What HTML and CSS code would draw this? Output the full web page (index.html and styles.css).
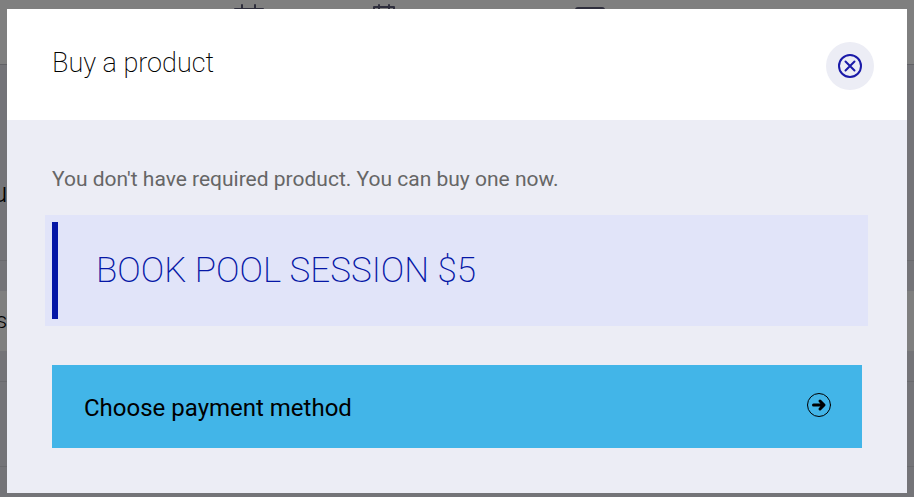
FILE: index.html
```
<!DOCTYPE html>
<html lang="en">

<head>
    <meta charset="UTF-8">
    <meta name="viewport" content="width=device-width, initial-scale=1.0">
    <title>Buy a product</title>
    <link rel="stylesheet" href="styles.css">
</head>

<body>
    <div class="page" aria-hidden="true">
        <div class="page-header">
            <svg class="nav-icon" width="30" height="30" viewBox="0 0 30 30">
                <path d="M1 6h28v24H1zM8 2v6M21 2v6" />
            </svg>
            <svg class="nav-icon" width="24" height="30" viewBox="0 0 24 30">
                <path d="M2 27V4h20v23zM7 2v5M17 2v5" />
            </svg>
            <svg class="nav-icon" width="30" height="30" viewBox="0 0 30 30">
                <rect x="1" y="5" width="28" height="22" rx="2" />
            </svg>
        </div>
        <div class="page-title">u</div>
        <div class="page-gap"></div>
        <div class="page-row">s</div>
        <div class="page-gap"></div>
        <div class="page-block"></div>
    </div>

    <div class="overlay">
        <div class="modal" role="dialog" aria-labelledby="modal-title">
            <div class="modal-header">
                <h1 class="modal-title" id="modal-title">Buy a product</h1>
                <button type="button" class="close-btn" aria-label="Close">
                    <svg width="24" height="24" viewBox="0 0 24 24">
                        <circle cx="12" cy="12" r="11" />
                        <path d="M7.500 7.500l9 9M16.500 7.500l-9 9" />
                    </svg>
                </button>
            </div>
            <div class="modal-body">
                <p class="message">You don't have required product. You can buy one now.</p>
                <div class="product">
                    <h2 class="product-name">BOOK POOL SESSION $5</h2>
                </div>
                <button type="button" class="pay-btn">
                    <span>Choose payment method</span>
                    <svg width="26" height="26" viewBox="0 0 26 26">
                        <circle cx="13" cy="13" r="11.500" />
                        <path d="M7.500 13h10M14 9l4 4l-4 4" />
                    </svg>
                </button>
            </div>
        </div>
    </div>
</body>

</html>
```
FILE: styles.css
```
* {
    box-sizing: border-box;
}

body {
    margin: 0;
    font-family: Roboto, sans-serif;
    background-color: #e9e9f0;
    color: #000;
    overflow: hidden;
}

h1,
h2,
p {
    margin: 0;
}

button {
    font-family: inherit;
    border: 0;
    cursor: pointer;
}

svg {
    display: block;
    fill: none;
    stroke: currentColor;
    stroke-linecap: round;
    stroke-linejoin: round;
}

/* Page behind the dialog */
.page {
    min-height: 100vh;
}

.page-header {
    display: grid;
    grid-template-columns: 30px 24px 30px;
    column-gap: 108px;
    justify-content: start;
    height: 65px;
    padding: 3px 0 0 234px;
    background-color: #fff;
    border-bottom: 1px solid #c4c4cc;
    color: #5c5c78;
}

.nav-icon {
    stroke-width: 2;
}

.nav-icon:last-child {
    margin-left: 71px;
}

.page-title {
    height: 196px;
    padding-top: 112px;
    margin-left: -8px;
    font-size: 28px;
    font-weight: 300;
    line-height: 32px;
    border-bottom: 1px solid #d4d4dc;
}

.page-gap {
    height: 30px;
}

.page-row {
    height: 60px;
    margin-left: -4px;
    font-size: 22px;
    font-weight: 300;
    line-height: 60px;
    background-color: #fff;
}

.page-block {
    height: 86px;
    border-top: 1px solid #d4d4dc;
    border-bottom: 1px solid #d4d4dc;
}

/* Dialog */
.overlay {
    position: fixed;
    inset: 0;
    padding: 9px 7px 4px;
    background-color: rgba(0, 0, 0, 0.5);
}

.modal {
    display: flex;
    flex-direction: column;
    height: 100%;
    background-color: #ecedf5;
}

.modal-header {
    display: flex;
    justify-content: space-between;
    align-items: flex-start;
    padding: 33px 33px 30px 45px;
    background-color: #fff;
}

.modal-title {
    font-size: 27px;
    font-weight: 200;
    line-height: 42px;
}

.close-btn {
    display: flex;
    align-items: center;
    justify-content: center;
    width: 48px;
    height: 48px;
    padding: 0;
    border-radius: 50%;
    background-color: #ecedf5;
    color: #1a1aa8;
}

.close-btn svg {
    stroke-width: 2;
}

.modal-body {
    padding: 44px 45px;
}

.message {
    font-size: 21px;
    line-height: 30px;
    color: #666;
}

.product {
    margin: 21px -6px 39px -7px;
    padding: 7px;
    background-color: #e1e4f9;
}

.product-name {
    padding: 25px 38px 24px;
    border-left: 6px solid #0517a6;
    font-size: 35px;
    font-weight: 200;
    line-height: 48px;
    color: #0517a6;
}

.pay-btn {
    display: flex;
    justify-content: space-between;
    align-items: flex-start;
    width: 100%;
    padding: 27px 30px 24px 32px;
    background-color: #42b5e8;
    color: #000;
    font-size: 24px;
    line-height: 32px;
}

.pay-btn path {
    stroke-width: 3;
}
```
